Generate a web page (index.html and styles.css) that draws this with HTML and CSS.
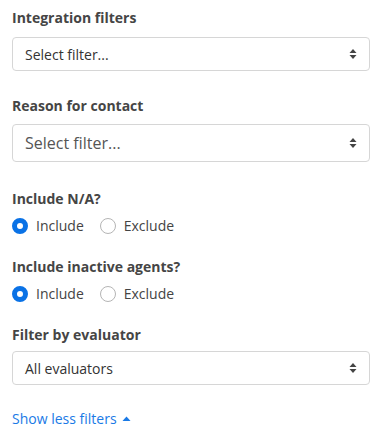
FILE: index.html
```html
<!DOCTYPE html>
<html lang="en">
<head>
    <meta charset="UTF-8">
    <meta name="viewport" content="width=device-width, initial-scale=1.0">
    <title>Filters</title>
    <link rel="stylesheet" href="styles.css">
</head>
<body>
    <div class="filters">
        <div class="filter-group">
            <div class="filter-label">Integration filters</div>
            <div class="select">
                <span>Select filter...</span>
                <svg class="caret" width="8" height="12" viewBox="0 0 8 12"><path d="M4 1 L7.5 5 H0.5 Z M4 11 L7.5 7 H0.5 Z" fill="#444"/></svg>
            </div>
        </div>
        <div class="filter-group group-lg">
            <div class="filter-label">Reason for contact</div>
            <div class="select select-lg">
                <span>Select filter...</span>
                <svg class="caret" width="8" height="12" viewBox="0 0 8 12"><path d="M4 1 L7.5 5 H0.5 Z M4 11 L7.5 7 H0.5 Z" fill="#444"/></svg>
            </div>
        </div>
        <div class="filter-group group-radio">
            <div class="filter-label">Include N/A?</div>
            <div class="radios">
                <label class="radio"><span class="dot checked"></span>Include</label>
                <label class="radio"><span class="dot"></span>Exclude</label>
            </div>
        </div>
        <div class="filter-group group-radio">
            <div class="filter-label">Include inactive agents?</div>
            <div class="radios">
                <label class="radio"><span class="dot checked"></span>Include</label>
                <label class="radio"><span class="dot"></span>Exclude</label>
            </div>
        </div>
        <div class="filter-group group-last">
            <div class="filter-label">Filter by evaluator</div>
            <div class="select">
                <span>All evaluators</span>
                <svg class="caret" width="8" height="12" viewBox="0 0 8 12"><path d="M4 1 L7.5 5 H0.5 Z M4 11 L7.5 7 H0.5 Z" fill="#444"/></svg>
            </div>
        </div>
        <a class="toggle-link" href="#">Show less filters
            <svg width="9" height="6" viewBox="0 0 9 6"><path d="M4.5 0.5 L8.5 5 H0.5 Z" fill="#1a7ae6"/></svg>
        </a>
    </div>
</body>
</html>
```

FILE: styles.css
```css
body {
    margin: 0;
    background-color: white;
    font-family: "Open Sans", Arial, sans-serif;
    color: #444;
}
.filters {
    padding: 8px 20px 0 12px;
}
.filter-group {
    margin-bottom: 25px;
}
.filter-label {
    font-size: 14px;
    font-weight: 700;
    line-height: 20px;
    color: #454545;
    margin-bottom: 9px;
}
.group-lg {
    margin-bottom: 27px;
}
.group-lg .filter-label {
    margin-bottom: 8px;
}
.group-radio {
    margin-bottom: 21px;
}
.group-radio .filter-label {
    margin-bottom: 7px;
}
.group-radio + .group-last {
    margin-top: 1px;
}
.group-last {
    margin-bottom: 22px;
}
.group-last .filter-label {
    margin-bottom: 6px;
}
.select {
    display: flex;
    align-items: center;
    justify-content: space-between;
    height: 34px;
    box-sizing: border-box;
    border: 1px solid #d6d6d6;
    border-radius: 4px;
    padding: 0 12px;
    font-size: 14px;
    color: #333;
}
.select-lg {
    height: 38px;
    font-size: 16px;
    color: #555;
}
.caret {
    display: block;
}
.radios {
    display: flex;
    gap: 16px;
}
.radio {
    display: flex;
    align-items: center;
    gap: 8px;
    font-size: 14px;
    color: #444;
    line-height: 20px;
}
.dot {
    width: 16px;
    height: 16px;
    box-sizing: border-box;
    border-radius: 50%;
    border: 1px solid #b5b5b5;
    background-color: white;
}
.dot.checked {
    border: 5px solid #0a72e6;
}
.toggle-link {
    display: inline-flex;
    align-items: center;
    gap: 5px;
    line-height: 20px;
    font-size: 14px;
    color: #1a7ae6;
    text-decoration: none;
}
```
